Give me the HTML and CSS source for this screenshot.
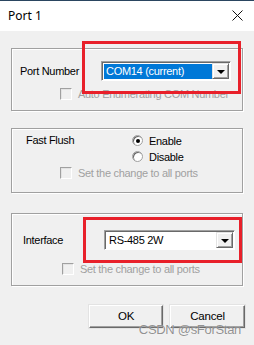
FILE: index.html
```html
<!DOCTYPE html>
<html lang="en">
<head>
  <meta charset="UTF-8" />
  <title>Port 1</title>
  <link rel="stylesheet" href="styles.css">
</head>
<body>
  <div class="window">
    <div class="titlebar">
      <span class="title">Port 1</span>
      <svg class="close" width="11" height="11" viewBox="0 0 11 11">
        <path d="M0.5 0.5 L10.5 10.5 M10.5 0.5 L0.5 10.5" stroke="#111" stroke-width="1" fill="none"/>
      </svg>
    </div>

    <div class="dialog">
      <fieldset class="group group-port">
        <div class="row">
          <span class="label label-port">Port Number</span>
          <div class="combo">
            <span class="combo-value selected">COM14 (current)</span>
            <span class="drop"><i></i></span>
          </div>
        </div>
        <label class="check check-port">
          <span class="box"></span>
          <span>Auto Enumerating COM Number</span>
        </label>
        <div class="mark mark-port"></div>
      </fieldset>

      <fieldset class="group group-flush">
        <div class="flush">
          <span class="label label-flush">Fast Flush</span>
          <div class="radios">
            <label class="radio"><span class="dot on"></span>Enable</label>
            <label class="radio"><span class="dot"></span>Disable</label>
          </div>
        </div>
        <label class="check check-flush">
          <span class="box"></span>
          <span>Set the change to all ports</span>
        </label>
      </fieldset>

      <fieldset class="group group-iface">
        <div class="row">
          <span class="label label-iface">Interface</span>
          <div class="combo combo-iface">
            <span class="combo-value">RS-485 2W</span>
            <span class="drop"><i></i></span>
          </div>
        </div>
        <label class="check check-iface">
          <span class="box"></span>
          <span>Set the change to all ports</span>
        </label>
        <div class="mark mark-iface"></div>
      </fieldset>

      <div class="buttons">
        <button class="btn">OK</button>
        <button class="btn btn-cancel">Cancel</button>
        <span class="watermark">CSDN @sForStan</span>
      </div>
    </div>
  </div>
</body>
</html>
```

FILE: styles.css
```css
:root {
  --face: #f0f0f0;
  --edge: #a0a0a0;
  --dark: #696969;
  --muted: #a0a0a0;
  --red: #e8202a;
  --select: #0078d7;
}

* {
  margin: 0;
  padding: 0;
  box-sizing: border-box;
}

body {
  width: 254px;
  height: 345px;
  overflow: hidden;
  background-color: var(--face);
  font-family: 'Liberation Sans', Arial, sans-serif;
  font-size: 11px;
  letter-spacing: -0.3px;
  color: #000;
}

.titlebar {
  height: 31px;
  background-color: #fff;
  border-top: 1px solid #2a4560;
  display: flex;
  align-items: center;
  justify-content: space-between;
  padding: 0 11px 0 8px;
}

.title {
  font-family: 'Noto Sans', 'Open Sans', sans-serif;
  font-size: 12px;
  letter-spacing: 0;
  margin-top: -1px;
}

.close {
  display: block;
  margin-top: -1px;
}

.dialog {
  padding: 17px 11px 0 11px;
}

.group {
  position: relative;
  border: 1px solid var(--edge);
  box-shadow: 1px 1px 0 #fff, inset 1px 1px 0 #fff;
}

.group-port {
  height: 63px;
  padding: 12px 0 0 8px;
}

.group-flush {
  height: 65px;
  margin-top: 17px;
  padding: 5px 0 0 14px;
}

.group-iface {
  height: 73px;
  margin-top: 20px;
  padding: 16px 0 0 11px;
}

.row {
  display: flex;
  align-items: center;
}

.label-port {
  width: 81px;
}

.label-iface {
  width: 81px;
}

.combo {
  width: 130px;
  height: 20px;
  display: flex;
  background-color: #fff;
  border: 1px solid;
  border-color: var(--edge) #fff #fff var(--edge);
  box-shadow: inset 1px 1px 0 var(--dark);
  padding: 2px 1px 1px 2px;
}

.combo-iface {
  width: 131px;
}

.combo-value {
  flex: 1;
  line-height: 15px;
  padding-left: 2px;
  white-space: nowrap;
  overflow: hidden;
}

.combo-value.selected {
  background-color: var(--select);
  color: #fff;
}

.drop {
  width: 17px;
  height: 16px;
  margin-top: -1px;
  background-color: var(--face);
  border: 1px solid;
  border-color: #e3e3e3 var(--dark) var(--dark) #e3e3e3;
  box-shadow: inset 1px 1px 0 #fff, inset -1px -1px 0 var(--edge);
  display: flex;
  align-items: center;
  justify-content: center;
}

.drop i {
  width: 0;
  height: 0;
  border-left: 4px solid transparent;
  border-right: 4px solid transparent;
  border-top: 4px solid #000;
  margin-top: 1px;
}

.check {
  display: flex;
  align-items: center;
  gap: 6px;
  color: var(--muted);
}

.box {
  width: 12px;
  height: 12px;
  border: 1px solid;
  border-color: var(--edge) #fff #fff var(--edge);
  box-shadow: inset 1px 1px 0 #e3e3e3;
  background-color: var(--face);
}

.check-port {
  margin: 7px 0 0 40px;
}

.check-flush {
  margin: 5px 0 0 34px;
}

.check-iface {
  margin: 13px 0 0 39px;
}

.flush {
  display: flex;
}

.label-flush {
  width: 106px;
  line-height: 13px;
}

.radios {
  display: flex;
  flex-direction: column;
  gap: 5px;
  margin-top: 1px;
}

.radio {
  display: flex;
  align-items: center;
  gap: 6px;
  height: 11px;
}

.dot {
  width: 11px;
  height: 11px;
  border-radius: 50%;
  background-color: #fff;
  border: 1px solid var(--edge);
  box-shadow: inset 1px 1px 0 var(--dark);
  display: flex;
  align-items: center;
  justify-content: center;
}

.dot.on::after {
  content: '';
  width: 4px;
  height: 4px;
  border-radius: 50%;
  background-color: #000;
}

/* red highlight boxes drawn on top of the dialog */
.mark {
  position: absolute;
  border: 3px solid var(--red);
  pointer-events: none;
}

.mark-port {
  left: 70px;
  top: -8px;
  width: 159px;
  height: 53px;
}

.mark-iface {
  left: 71px;
  top: 3px;
  width: 159px;
  height: 46px;
}

.buttons {
  position: relative;
  display: flex;
  justify-content: flex-end;
  gap: 7px;
  margin: 19px -2px 0 0;
}

.btn {
  width: 74px;
  height: 23px;
  padding-bottom: 2px;
  font-family: inherit;
  font-size: 11.5px;
  letter-spacing: -0.2px;
  background-color: #f0f0f0;
  border: 1px solid;
  border-color: #fff var(--dark) var(--dark) #fff;
  box-shadow: inset -1px -1px 0 var(--edge), 0 0 0 1px #e3e3e3;
  color: #000;
}

.btn-cancel {
  width: 75px;
}

.watermark {
  position: absolute;
  right: 4px;
  top: 17px;
  font-size: 13px;
  letter-spacing: -0.3px;
  color: rgba(110, 110, 110, 0.75);
  text-shadow: 0 0 1px rgba(255, 255, 255, 0.8);
  white-space: nowrap;
}
```
